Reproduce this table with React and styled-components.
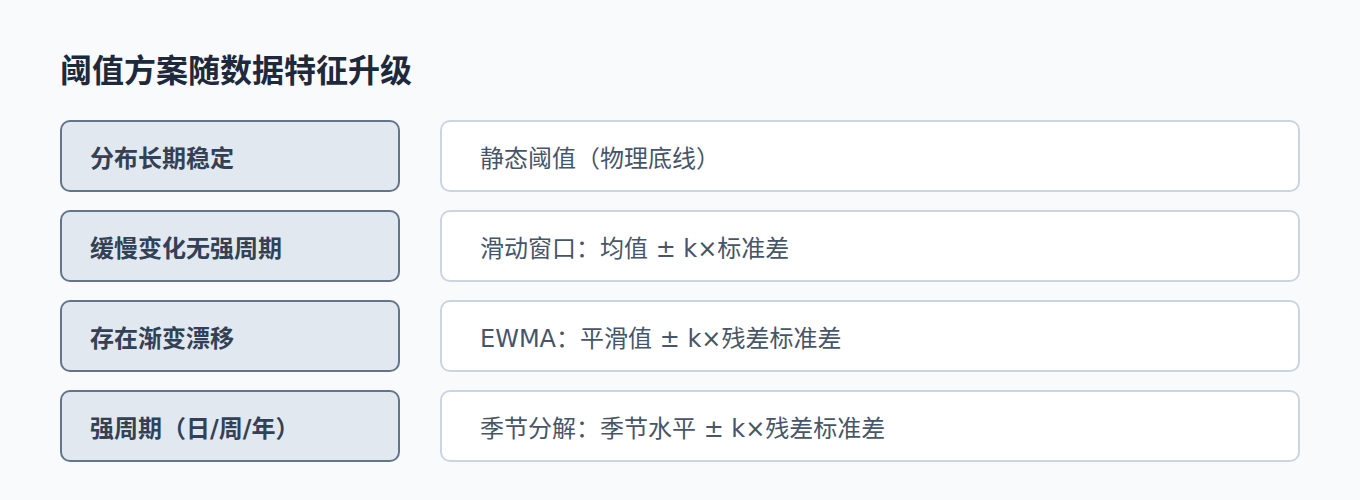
import React from "react";
import styled, { createGlobalStyle } from "styled-components";

const Global = createGlobalStyle`
  html, body { margin: 0; padding: 0; background: #f8fafc; }
  body { font-family: "DejaVu Sans", "Noto Sans CJK SC", sans-serif; }
`;

const Page = styled.div`
  box-sizing: border-box;
  width: 1360px;
  height: 500px;
  padding: 52px 60px 38px;
  background: #f8fafc;
`;

const Title = styled.h2`
  margin: 0 0 30px;
  font-size: 32px;
  line-height: 38px;
  font-weight: 700;
  color: #1e293b;
`;

const Rows = styled.div`
  display: flex;
  flex-direction: column;
  gap: 18px;
`;

const Row = styled.div`
  display: grid;
  grid-template-columns: 340px 1fr;
  gap: 40px;
`;

const Cell = styled.div`
  box-sizing: border-box;
  height: 72px;
  display: flex;
  align-items: center;
  border-radius: 10px;
  border: 2px solid ${(p) => (p.$kind === "cond" ? "#64748b" : "#cbd5e1")};
  background: ${(p) => (p.$kind === "cond" ? "#e2e8f0" : "#ffffff")};
  padding-left: ${(p) => (p.$kind === "cond" ? "28px" : "38px")};
  font-size: 24px;
  font-weight: ${(p) => (p.$kind === "cond" ? 700 : 400)};
  color: ${(p) => (p.$kind === "cond" ? "#334155" : "#475569")};
  white-space: nowrap;
`;

const data = [
  ["分布长期稳定", "静态阈值（物理底线）"],
  ["缓慢变化无强周期", "滑动窗口：均值 ± k×标准差"],
  ["存在渐变漂移", "EWMA：平滑值 ± k×残差标准差"],
  ["强周期（日/周/年）", "季节分解：季节水平 ± k×残差标准差"],
];

export default function App() {
  return (
    <Page>
      <Global />
      <Title>阈值方案随数据特征升级</Title>
      <Rows>
        {data.map(([c, m]) => (
          <Row key={c}>
            <Cell $kind="cond">{c}</Cell>
            <Cell $kind="method">{m}</Cell>
          </Row>
        ))}
      </Rows>
    </Page>
  );
}
